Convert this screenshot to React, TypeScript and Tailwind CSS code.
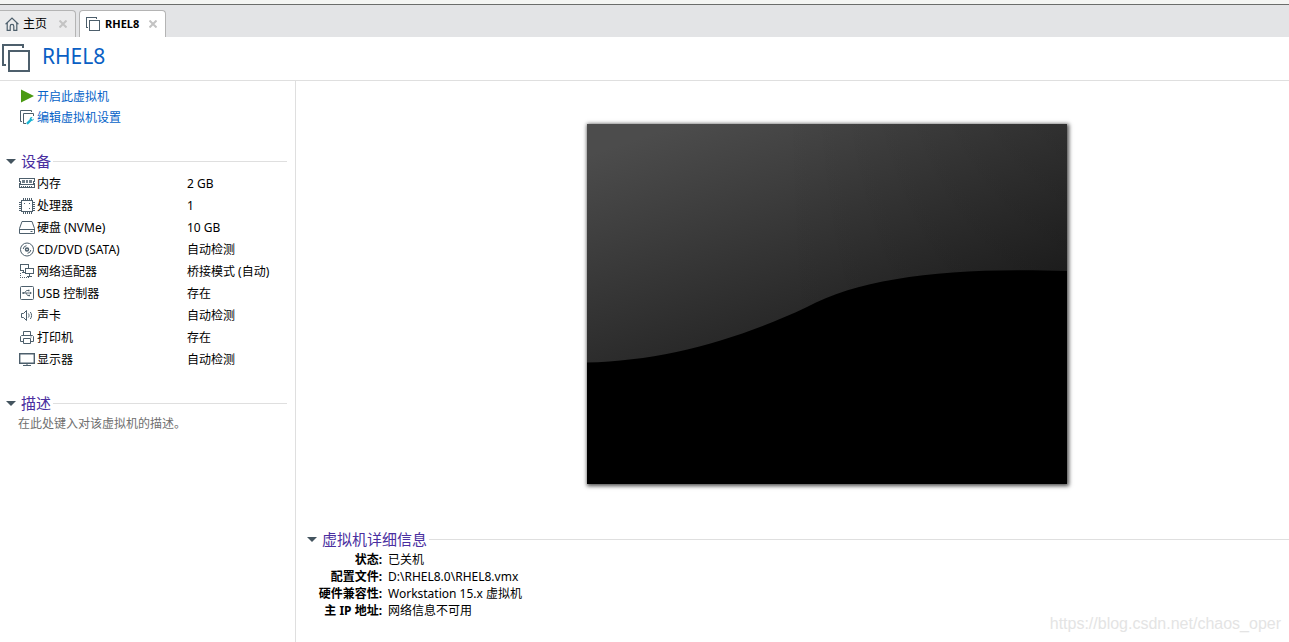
import React, { useState } from 'react';

interface IconProps {
  className?: string;
}

interface Device {
  name: string;
  value: string;
  icon: React.FC<IconProps>;
}

const HomeIcon: React.FC<IconProps> = ({ className }) => (
  <svg className={className} viewBox="0 0 14 14" fill="none" stroke="#4d5f6c" strokeWidth="1.2">
    <path d="M0.6 7.2 7 1l6.4 6.2" />
    <path d="M2.2 6v7.3h3V9.2c0-2.4 3.6-2.4 3.6 0v4.1h3V6" />
  </svg>
);

const VmIcon: React.FC<IconProps> = ({ className }) => (
  <svg className={className} viewBox="0 0 14 14" fill="none" stroke="#4d5f6c" shapeRendering="crispEdges">
    <path d="M2 10.5H0.5V0.5h10V2" />
    <path d="M3.5 3.5h10v10h-10z" />
  </svg>
);

const VmLargeIcon: React.FC<IconProps> = ({ className }) => (
  <svg className={className} viewBox="0 0 28 28" fill="none" stroke="#4d5f6c" strokeWidth="2" shapeRendering="crispEdges">
    <path d="M4 21H1V1h20v3" />
    <path d="M7 7h20v20H7z" />
  </svg>
);

const PlayIcon: React.FC<IconProps> = ({ className }) => (
  <svg className={className} viewBox="0 0 16 16">
    <path d="M2 0.5v13L15 7z" fill="#4a9a12" />
  </svg>
);

const EditVmIcon: React.FC<IconProps> = ({ className }) => (
  <svg className={className} viewBox="0 0 16 16" fill="none" stroke="#4d5f6c">
    <path d="M3 11.5H1.5v-11h11V2" />
    <path d="M7 13.5H4.5v-10h10V6" />
    <path d="m8.6 13.2 3.2-3.2" stroke="#19b3d1" strokeWidth="2.4" strokeLinecap="round" />
    <path d="M15 8.400l-1.700 1.300-1-1 1.300-1.700c-1.800-.4-3.300 1-2.800 2.700.8 1.800 3.900 1.500 4.200-1.300z" fill="#19b3d1" stroke="none" />
  </svg>
);

const MemoryIcon: React.FC<IconProps> = ({ className }) => (
  <svg className={className} viewBox="0 0 16 16" fill="none" stroke="#4d5f6c" shapeRendering="crispEdges">
    <path d="M0.5 2.5h15v3h-1v2h1v4H0.5v-4h1v-2h-1z" />
    <path d="M3 4h3v3H3zM7 4h2v3H7zM10 4h3v3h-3z" fill="#6f7e89" stroke="none" />
    <path d="M1 8.500h14" />
    <path d="M2 10.500h12" strokeDasharray="1 1" />
  </svg>
);

const CpuIcon: React.FC<IconProps> = ({ className }) => (
  <svg className={className} viewBox="0 0 16 16" fill="none" stroke="#4d5f6c" shapeRendering="crispEdges">
    <path d="M2.5 2.5h11v11h-11z" />
    <path d="M4.5 0v2M6.5 0v2M8.5 0v2M10.5 0v2M12.5 0v2M4.5 14v2M6.5 14v2M8.5 14v2M10.5 14v2M12.5 14v2" />
    <path d="M0 4.500h2M0 6.500h2M0 8.500h2M0 10.500h2M0 12.500h2M14 4.500h2M14 6.500h2M14 8.500h2M14 10.500h2M14 12.500h2" />
    <path d="M5 5.500h1M10 5.500h1M10 10.500h1" />
  </svg>
);

const DiskIcon: React.FC<IconProps> = ({ className }) => (
  <svg className={className} viewBox="0 0 16 16" fill="none" stroke="#4d5f6c">
    <path d="M0.5 8.5 3 1.500h10l2.500 7v5H0.500zM1 9.500h14" />
    <path d="M11.500 11.500h2" />
  </svg>
);

const DiscIcon: React.FC<IconProps> = ({ className }) => (
  <svg className={className} viewBox="0 0 16 16" fill="none" stroke="#4d5f6c">
    <circle cx="8" cy="7.500" r="6.500" />
    <circle cx="8" cy="7.500" r="1.500" strokeWidth="1.500" />
    <path d="M4.200 7A3.800 3.800 0 0 1 7.500 3.700M11.800 8a3.800 3.800 0 0 1-3.300 3.300" />
  </svg>
);

const NetworkIcon: React.FC<IconProps> = ({ className }) => (
  <svg className={className} viewBox="0 0 16 16" fill="none" stroke="#4d5f6c" shapeRendering="crispEdges">
    <path d="M5 6.500H1.500v-6h8V4M4.500 7v2M3 8.500h3" />
    <path d="M6.500 4.500h8v5h-8zM10.500 10v2M8 12.500h5" />
    <path d="M1.500 9v5M1 13.500h9" strokeDasharray="1 1" />
  </svg>
);

const UsbIcon: React.FC<IconProps> = ({ className }) => (
  <svg className={className} viewBox="0 0 16 16" fill="none" stroke="#4d5f6c">
    <rect x="1.5" y="0.5" width="13" height="13" rx="1" />
    <path d="M4 7h8M5.500 7l2-2.500h2M7 7l1.500 2.500H10" strokeWidth="0.900" />
    <circle cx="4.200" cy="7" r="1" fill="#4d5f6c" stroke="none" />
    <path d="M11 5.700v2.600L13 7zM9 3.800h1.500v1.500H9zM9.500 8.800H11v1.500H9.500z" fill="#4d5f6c" stroke="none" />
  </svg>
);

const SoundIcon: React.FC<IconProps> = ({ className }) => (
  <svg className={className} viewBox="0 0 16 16" fill="none" stroke="#4d5f6c">
    <path d="M2.500 5.500h2L7.500 2.500v10l-3-3h-2z" />
    <path d="M9.300 5.500c1 1.200 1 2.800 0 4M11.300 4c1.700 2 1.700 5 0 7" />
  </svg>
);

const PrinterIcon: React.FC<IconProps> = ({ className }) => (
  <svg className={className} viewBox="0 0 16 16" fill="none" stroke="#4d5f6c">
    <path d="M4.500 5.500v-4h7v4" />
    <path d="M4 11.500H1.500v-5l1-1h11l1 1v5H12" />
    <path d="M4.500 8.500h7v5h-7zM11.500 7h1" />
  </svg>
);

const DisplayIcon: React.FC<IconProps> = ({ className }) => (
  <svg className={className} viewBox="0 0 16 16" fill="none" stroke="#4d5f6c">
    <path d="M0.700 1.700h14.600v9.600H0.700z" strokeWidth="1.400" />
    <path d="M8 12v1M4 13.500h8" />
  </svg>
);

const CloseIcon: React.FC<IconProps> = ({ className }) => (
  <svg className={className} viewBox="0 0 8 8" stroke="#c3c3c3" strokeWidth="2">
    <path d="M0.500 0.500l7 7M7.500 0.500l-7 7" />
  </svg>
);

const devices: Device[] = [
  { name: '内存', value: '2 GB', icon: MemoryIcon },
  { name: '处理器', value: '1', icon: CpuIcon },
  { name: '硬盘 (NVMe)', value: '10 GB', icon: DiskIcon },
  { name: 'CD/DVD (SATA)', value: '自动检测', icon: DiscIcon },
  { name: '网络适配器', value: '桥接模式 (自动)', icon: NetworkIcon },
  { name: 'USB 控制器', value: '存在', icon: UsbIcon },
  { name: '声卡', value: '自动检测', icon: SoundIcon },
  { name: '打印机', value: '存在', icon: PrinterIcon },
  { name: '显示器', value: '自动检测', icon: DisplayIcon },
];

const details = [
  { label: '状态:', value: '已关机' },
  { label: '配置文件:', value: 'D:\\RHEL8.0\\RHEL8.vmx' },
  { label: '硬件兼容性:', value: 'Workstation 15.x 虚拟机' },
  { label: '主 IP 地址:', value: '网络信息不可用' },
];

interface SectionProps {
  title: string;
  className?: string;
  children: React.ReactNode;
}

const Section: React.FC<SectionProps> = ({ title, className, children }) => {
  const [open, setOpen] = useState(true);

  return (
    <section className={className}>
      <h2 className="flex h-[22px] items-center gap-[2px]">
        <button
          type="button"
          aria-expanded={open}
          onClick={() => setOpen(!open)}
          className="flex items-center gap-[5px] text-[15px] leading-[22px] text-[#4a2fa0]"
        >
          <svg className={open ? 'h-[5px] w-[10px]' : 'h-[5px] w-[10px] -rotate-90'} viewBox="0 0 10 5">
            <path d="M0 0h10L5 5z" fill="#44545f" />
          </svg>
          {title}
        </button>
        <span className="h-px flex-1 bg-[#dfdfdf]" />
      </h2>
      {open && <div className="pt-px">{children}</div>}
    </section>
  );
};

export default function App() {
  const [activeTab, setActiveTab] = useState('vm');

  const tabClass = (id: string) =>
    activeTab === id
      ? 'flex items-center rounded-t-[4px] border border-b-0 border-[#b4b4b4] bg-white'
      : 'flex items-center rounded-t-[4px] border border-b-0 border-[#b4b4b4] bg-[#ebebec]';

  return (
    <div className="relative flex min-h-screen flex-col bg-white font-['Noto_Sans','Noto_Sans_CJK_SC',sans-serif] text-xs text-black">
      <div className="h-1 bg-[#f4f5f3]" />
      {/* Tabs */}
      <nav className="flex h-[33px] items-stretch gap-[3px] border-t border-[#6b6d6b] bg-[#e3e4e6] pt-[5px]">
        <div className={`${tabClass('home')} w-[76px] gap-3 rounded-tl-none border-l-0 pl-[5px]`}>
          <button type="button" onClick={() => setActiveTab('home')} className="flex items-center gap-1">
            <HomeIcon className="h-[14px] w-[14px]" />
            主页
          </button>
          <button type="button" aria-label="关闭主页">
            <CloseIcon className="h-2 w-2" />
          </button>
        </div>
        <div className={`${tabClass('vm')} w-[87px] gap-[10px] pl-[6px]`}>
          <button type="button" onClick={() => setActiveTab('vm')} className="flex items-center gap-[5px] text-[11px] font-bold">
            <VmIcon className="h-[14px] w-[14px]" />
            RHEL8
          </button>
          <button type="button" aria-label="关闭 RHEL8">
            <CloseIcon className="h-2 w-2" />
          </button>
        </div>
      </nav>

      <header className="flex h-11 items-center gap-3 border-b border-[#dfdfdf] pb-[2px] pl-[2px]">
        <VmLargeIcon className="h-7 w-7" />
        <h1 className="pb-1 text-[21px] leading-7 text-[#0a5fc4]">RHEL8</h1>
      </header>

      <div className="flex flex-1">
        {/* Sidebar */}
        <aside className="w-[296px] shrink-0 border-r border-[#dfdfdf] pt-[5px] pr-2 pl-[6px]">
          <div className="flex flex-col items-start pl-[13px] leading-[21px] text-[#0563c8]">
            <button type="button" className="flex items-center gap-[2px]">
              <PlayIcon className="h-4 w-4" />
              开启此虚拟机
            </button>
            <button type="button" className="flex items-center gap-[2px]">
              <EditVmIcon className="h-4 w-4" />
              编辑虚拟机设置
            </button>
          </div>

          <Section title="设备" className="mt-[22px]">
            <table className="ml-[13px] border-collapse text-left">
              <tbody>
                {devices.map(({ name, value, icon: Icon }) => (
                  <tr key={name} className="h-[22px]">
                    <th scope="row" className="w-[168px] p-0 font-normal">
                      <span className="flex items-center gap-[2px]">
                        <Icon className="h-4 w-4" />
                        {name}
                      </span>
                    </th>
                    <td className="p-0">{value}</td>
                  </tr>
                ))}
              </tbody>
            </table>
          </Section>

          <Section title="描述" className="mt-[21px]">
            <p className="pl-3 leading-[18px] text-[#6f6f6f]">在此处键入对该虚拟机的描述。</p>
          </Section>
        </aside>

        {/* Preview and details */}
        <main className="min-w-0 flex-1 pt-[43px]">
          <div className="flex justify-center pl-[69px]">
            <svg className="h-[360px] w-[480px] shadow-[1px_1px_4px_1px_rgba(0,0,0,0.7)]" viewBox="0 0 480 360">
              <defs>
                <linearGradient id="screen" gradientUnits="userSpaceOnUse" x1="40" y1="18" x2="124" y2="265">
                  <stop offset="0" stopColor="#4c4c4c" />
                  <stop offset="1" stopColor="#222222" />
                </linearGradient>
                <linearGradient id="shade" x1="0" y1="0" x2="1" y2="0">
                  <stop offset="0.4" stopColor="#000" stopOpacity="0" />
                  <stop offset="1" stopColor="#000" stopOpacity="0.15" />
                </linearGradient>
              </defs>
              <path d="M0 0h480v360H0z" fill="url(#screen)" />
              <path d="M0 0h480v360H0z" fill="url(#shade)" />
              <path d="M0 238.5C75 237 150 216 220 183C275 153 365 143 480 147V360H0z" fill="#000" />
            </svg>
          </div>

          <Section title="虚拟机详细信息" className="mt-11 pl-[11px]">
            <dl className="grid grid-cols-[75px_1fr] gap-x-[6px] leading-[17px]">
              {details.map(({ label, value }) => (
                <React.Fragment key={label}>
                  <dt className="text-right font-bold whitespace-nowrap">{label}</dt>
                  <dd>{value}</dd>
                </React.Fragment>
              ))}
            </dl>
          </Section>
        </main>
      </div>

      <div className="absolute right-2 bottom-2 font-['Liberation_Sans',sans-serif] text-base leading-5 text-[#e4e4e4]">
        https://blog.csdn.net/chaos_oper
      </div>
    </div>
  );
}
